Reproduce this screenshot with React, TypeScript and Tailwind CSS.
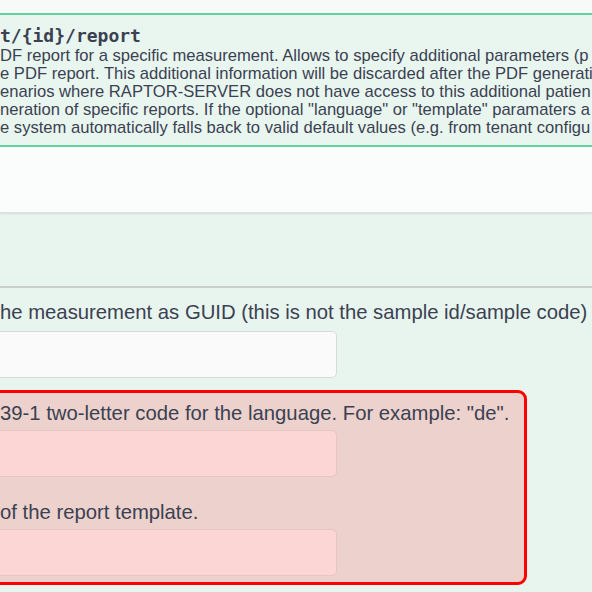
import React from "react";

const sans = { fontFamily: '"Liberation Sans", Arial, sans-serif' };

export default function App() {
  return (
    <div className="w-[592px] h-[592px] overflow-hidden bg-[#e8f5ef] text-[#3b4151]" style={sans}>
      <div className="h-[13px] bg-[#f8faf9]" />
      <div className="h-[134px] border-y-2 border-[#5fd39d] bg-[#e9f6f0] pt-[10px] whitespace-nowrap">
        <div className="font-bold text-[18px] leading-[22px] text-[#3b4151]" style={{ fontFamily: '"DejaVu Sans Mono", monospace' }}>
          t/{"{id}"}/report
        </div>
        <div className="text-[16.6px] leading-[18px] text-[#3b4151]">
          <div>DF report for a specific measurement. Allows to specify additional parameters (p</div>
          <div>e PDF report. This additional information will be discarded after the PDF generati</div>
          <div>enarios where RAPTOR-SERVER does not have access to this additional patien</div>
          <div>neration of specific reports. If the optional "language" or "template" paramaters a</div>
          <div>e system automatically falls back to valid default values (e.g. from tenant configu</div>
        </div>
      </div>
      <div className="h-[66px] bg-[#fbfcfc] border-b border-[#dcdfde] shadow-[0_1px_2px_rgba(0,0,0,0.1)]" />
      <div className="h-[75px] border-b-2 border-[#c9cecc]" />
      <div className="pt-[13px] whitespace-nowrap">
        <div className="text-[20.3px] leading-[22px]">he measurement as GUID (this is not the sample id/sample code)</div>
        <div className="mt-[8px] h-[47px] w-[347px] ml-[-10px] rounded-[5px] border border-[#d9d9d9] bg-[#fafafa]" />
        <div className="mt-[12px] ml-[-20px] w-[547px] h-[195px] rounded-[9px] border-[3px] border-[#ff0000] bg-[#ecd1cd] pl-[17px] pt-[9px]">
          <div className="text-[20.3px] leading-[22px]">39-1 two-letter code for the language. For example: "de".</div>
          <div className="mt-[6px] h-[47px] w-[357px] ml-[-20px] rounded-[5px] border border-[#e8c4c4] bg-[#fcd5d5]" />
          <div className="mt-[24px] text-[20.3px] leading-[22px]">of the report template.</div>
          <div className="mt-[6px] h-[47px] w-[357px] ml-[-20px] rounded-[5px] border border-[#e8c4c4] bg-[#fcd5d5]" />
        </div>
      </div>
    </div>
  );
}
